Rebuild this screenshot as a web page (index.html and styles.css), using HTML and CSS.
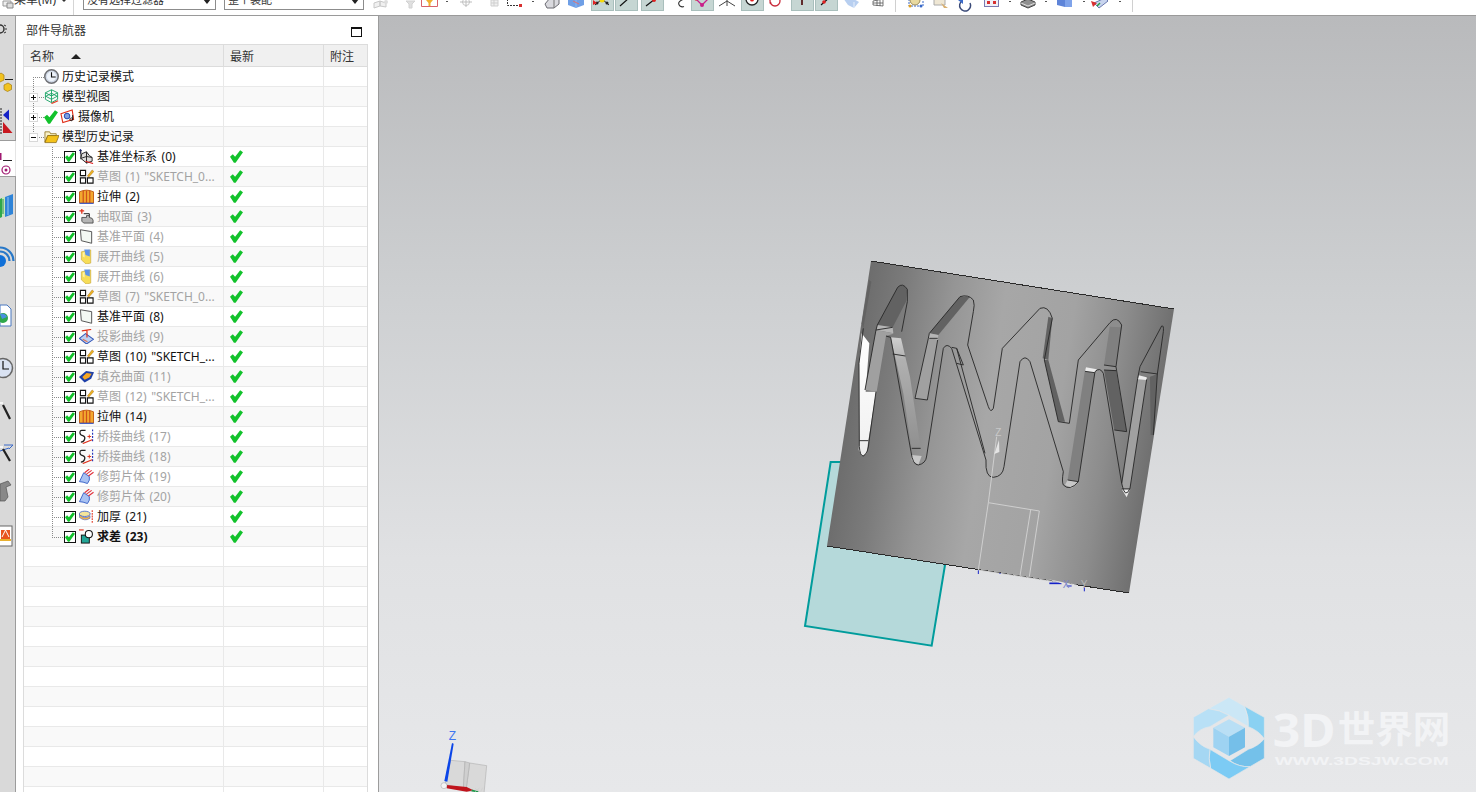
FILE: index.html
```html
<!DOCTYPE html>
<html lang="zh">
<head>
<meta charset="utf-8">
<title>部件导航器</title>
<link rel="stylesheet" href="styles.css">
</head>
<body>
<svg class="sprite" width="0" height="0" aria-hidden="true">
  <defs>
    <symbol id="i-check" viewBox="0 0 12 12"><path d="M0 6.200 L2.600 4 L4.700 6.200 L9.400 0.300 L12 2 L5.200 11.800 L3.600 11.800Z" fill="#12c22c"/></symbol>
    <symbol id="i-clock" viewBox="0 0 16 16"><circle cx="8" cy="8" r="7.200" fill="#cfd8e6" stroke="#6f7074" stroke-width="1.600"/><circle cx="8" cy="8" r="5" fill="#eef3fa"/><path d="M8 3.500V8.500H12.500" fill="none" stroke="#111" stroke-width="1.200"/></symbol>
    <symbol id="i-view" viewBox="0 0 16 16"><path d="M8 .8L14.500 4V11L8 14.500L1.500 11V4Z M1.500 4L8 7.500L14.500 4 M8 1V14.500 M1.500 8L8 4.500L14.500 8 M1.500 7.500L8 11L14.500 7.500" fill="none" stroke="#1fa56a" stroke-width="1"/><path d="M8 15.500L15 12.500" stroke="#e63a22" stroke-width="1.300"/></symbol>
    <symbol id="i-cam" viewBox="0 0 16 16"><path d="M1 5L13 1L14.500 11L3 14.500Z" fill="#fff" stroke="#e0301a" stroke-width="1.200"/><circle cx="7.500" cy="7.500" r="3" fill="#7f9fdf" stroke="#1c3fb0"/><path d="M12 9.500a1.500 1.500 0 1 0 .1 0M13.500 6.500V12" fill="none" stroke="#111"/></symbol>
    <symbol id="i-folder" viewBox="0 0 16 16"><path d="M1 3H6L7 5H13V7H4L1 14Z" fill="#f7f0c8" stroke="#8a6a10" stroke-width=".8"/><path d="M4 7H16L13 14.500H1Z" fill="#f4c21a" stroke="#8a6a10" stroke-width=".8"/></symbol>
    <symbol id="i-csys" viewBox="0 0 16 16"><path d="M1.500 0V5M0 1.500H3" stroke="#1a2a9a" stroke-width="1"/><path d="M2 1V11" stroke="#222" fill="none"/><path d="M3 5L8 3L11 7L14 9V13L8 15L2 10Z" fill="#ddd" stroke="#222" stroke-width="1"/><path d="M2 10L8 8L14 9M8 3V15" fill="none" stroke="#222"/><path d="M7 13L15 15.500" stroke="#d22" stroke-width="1.200"/></symbol>
    <symbol id="i-sketch" viewBox="0 0 16 16"><path d="M1.500 1.500H7V7H1.500ZM1.500 9.500H7V15H1.500ZM9 9.500H15V15H9Z" fill="#fff" stroke="#111" stroke-width="1.200"/><path d="M9 7.500L14 1L15.800 2.600L10.500 8.500Z" fill="#eeb520" stroke="#a06010" stroke-width=".5"/></symbol>
    <symbol id="i-extrude" viewBox="0 0 16 16"><path d="M.5 3Q8 -.5 15.500 3V15H.5Z" fill="#f2a92f" stroke="#c05a10"/><path d="M4.500 2V15M8 1.500V15M11.500 2V15" stroke="#d0501a" stroke-width="1.300"/><path d="M.5 15.300H15.500" stroke="#3858c8" stroke-width="1.200"/></symbol>
    <symbol id="i-extract" viewBox="0 0 16 16"><path d="M3 0V5M.5 2H5.500" stroke="#e0301a" stroke-width="1.400"/><path d="M5 5H11V9" stroke="#111" fill="none"/><path d="M3 9H8V7H11V9L14 10L15 12V15H5L3 13Z" fill="#b5b5b5" stroke="#444" stroke-width=".9"/></symbol>
    <symbol id="i-plane" viewBox="0 0 16 16"><path d="M1.500 .8L13.500 2.800V15.200L2.500 12.500Z" fill="#f3f8f3" stroke="#4e4e4e" stroke-width="1"/></symbol>
    <symbol id="i-unfold" viewBox="0 0 16 16"><path d="M2.500 3L12.500 1V15L7.500 16L2.500 11.500Z" fill="#f6dd58" stroke="#c9a93a" stroke-width=".7"/><path d="M5.500 .5H11.500V8L7 6.500Z" fill="#5f93e6"/><path d="M4 4L6 3V9L4 8Z" fill="#fff3a8"/></symbol>
    <symbol id="i-proj" viewBox="0 0 16 16"><path d="M.5 10L7 5L15.500 11L8 16Z" fill="#bcd0f2" stroke="#3658b8" stroke-width="1.100"/><path d="M3 2L13 .5M8.500 1.500V9" stroke="#e0301a" stroke-width="1.300"/><path d="M4 11L9 13.500" stroke="#e07050" stroke-width="1.200"/></symbol>
    <symbol id="i-fill" viewBox="0 0 16 16"><path d="M0 8.500L7.500 2L16 3.500L13 10.500L6 14.500Z" fill="#1d3fa8"/><path d="M3.500 8.500L8 4.200L13.500 5L11 9L6 11.500Z" fill="#f5a623"/></symbol>
    <symbol id="i-bridge" viewBox="0 0 16 16"><path d="M7 1.500H3Q1 1.500 1 4T4 7Q7 8 6 11T2 14" fill="none" stroke="#222" stroke-width="1.300"/><path d="M9 8H13M11 6V10" stroke="#e0301a"/><path d="M14.500 .5V13" stroke="#2233bb" stroke-width="1.200" stroke-dasharray="2 1.500"/><path d="M4 15.500L14 11.500" stroke="#e0301a" stroke-width="1.300"/></symbol>
    <symbol id="i-trim" viewBox="0 0 16 16"><path d="M.5 13.500L5 4L11 8Q12 12 9 15.500Q4 13.500 .5 13.500Z" fill="#a9c2f2" stroke="#3a62c8"/><path d="M6 4L11 0M8 5.500L13.500 1.500M10 7.500L15.500 3.500" stroke="#e0303a" stroke-width="1.200"/></symbol>
    <symbol id="i-thick" viewBox="0 0 17 16"><ellipse cx="6.500" cy="5" rx="6.200" ry="3" fill="#f5e59a" stroke="#4a6ac8"/><path d="M.5 6Q6.500 12 12.500 7V10Q6.500 14 .5 9Z" fill="#f3b24a" stroke="#4a6ac8" stroke-width=".7"/><path d="M15 1V15" stroke="#e0301a" stroke-width="1.200" stroke-dasharray="2 1"/></symbol>
    <symbol id="i-sub" viewBox="0 0 16 16"><path d="M0 1H5" stroke="#e0301a" stroke-width="1.200"/><rect x="2.500" y="6.500" width="8.500" height="8.500" fill="#22a596" stroke="#111"/><circle cx="10.500" cy="5.500" r="3.800" fill="#fff" stroke="#111" stroke-width="1.100"/></symbol>
  </defs>
</svg>

<header class="toolbar">
  <svg class="menu-icon" width="12" height="15" viewBox="0 0 12 15"><path d="M1 1H9V6H1Z" fill="#eee" stroke="#999"/><path d="M5 3H11V8H5Z" fill="#ddd" stroke="#888"/></svg>
  <span class="menu">菜单(M)</span>
  <span class="menu-caret"></span>
  <span class="sep-line"></span>
  <div class="select select-a"><span>没有选择过滤器</span><i class="caret"></i></div>
  <div class="select select-b"><span>整个装配</span><i class="caret"></i></div>

  <div class="tools">
    <svg width="32" height="15" viewBox="0 0 32 15"><path d="M1 3L7 1V6L1 8Z M7 1L13 3V7L7 6Z" fill="#f0f0f0" stroke="#c8c8c8"/><circle cx="13" cy="2" r="2" fill="#ddd"/></svg>
    <svg width="16" height="15" viewBox="0 0 16 15"><path d="M1 1H10L7 4V8H4V4Z" fill="#e0e0e0" stroke="#d2d2d2"/></svg>
    <svg width="25" height="15" viewBox="0 0 25 15"><path d="M.5 -2V6.500H16.500V-2" fill="#fff" stroke="#d9636a"/><path d="M5 0H12L9.500 3V6H7.500V3Z" fill="#f0b030"/></svg>
    <svg width="14" height="15" viewBox="0 0 14 15"><rect y="1" width="2" height="1" fill="#555"/></svg>
    <svg width="30" height="15" viewBox="0 0 30 15"><circle cx="6" cy="2" r="3.500" fill="none" stroke="#c6c6c6"/><path d="M6 -2V7M0 2H12" stroke="#bdbdbd"/></svg>
    <svg width="17" height="15" viewBox="0 0 17 15"><path d="M1 0H8V6H1ZM4 0V6M1 3H8" fill="#f0f0f0" stroke="#cfcfcf"/></svg>
    <svg width="25" height="15" viewBox="0 0 25 15"><path d="M.5 -1V5.500H13" fill="none" stroke="#333" stroke-dasharray="2 1"/><rect x="12" y="4" width="3" height="3" fill="#d83030"/></svg>
    <svg width="12" height="15" viewBox="0 0 12 15"><rect y="1" width="2" height="1" fill="#555"/></svg>
    <svg width="24" height="15" viewBox="0 0 24 15"><path d="M1 4L6 -2H15V4L10 8H3Z" fill="#d9d9de" stroke="#6a6a72"/><path d="M10 0V8" stroke="#777"/></svg>
    <svg width="23" height="15" viewBox="0 0 23 15"><path d="M0 -2H16V5L8 8L0 5Z" fill="#6f9fe6"/><path d="M8 0V8" stroke="#8fb8ee"/><path d="M5 1L11 4" stroke="#e07070"/></svg>
    <span class="sel g1"><svg width="21" height="14" viewBox="0 0 21 14"><path d="M3 9L10 3L17 9" fill="none" stroke="#222"/><circle cx="10" cy="4" r="2.500" fill="#f5d90a"/><circle cx="5" cy="7" r="1.500" fill="#222"/><circle cx="15" cy="7" r="1.500" fill="#222"/><path d="M1 4V9L5 7Z" fill="#e02020"/></svg></span>
    <span class="sel g3"><svg width="21" height="14" viewBox="0 0 21 14"><path d="M4 10L13 2" stroke="#111" stroke-width="1.200"/></svg></span>
    <span class="sel"><svg width="21" height="14" viewBox="0 0 21 14"><path d="M4 10L13 3" stroke="#111" stroke-width="1.200"/><circle cx="12" cy="4" r="2" fill="#e02020"/></svg></span>
    <svg width="27" height="15" viewBox="0 0 27 15"><path d="M20 -1Q12 2 16 6Q18 7.500 20 6.500" fill="none" stroke="#333" stroke-width="1.100"/></svg>
    <span class="sel"><svg width="21" height="14" viewBox="0 0 21 14"><path d="M3 2L10 9L17 2" fill="none" stroke="#c8208a" stroke-width="1.300"/><circle cx="10" cy="9" r="2" fill="#c8208a"/><circle cx="4" cy="3" r="1.500" fill="#e02020"/></svg></span>
    <svg width="27" height="15" viewBox="0 0 27 15"><path d="M13 -1V6M13 1L5 6M13 1L21 6" fill="none" stroke="#444"/></svg>
    <span class="sel"><svg width="21" height="14" viewBox="0 0 21 14"><circle cx="10" cy="3" r="6" fill="#fff" stroke="#222" stroke-width="1.300"/><circle cx="10" cy="3.500" r="2" fill="#e02020"/></svg></span>
    <svg width="27" height="15" viewBox="0 0 27 15"><circle cx="11" cy="1" r="5" fill="none" stroke="#c82a3a" stroke-width="1.300"/><circle cx="6.500" cy="3" r="1" fill="#c82a3a"/></svg>
    <span class="sel g1"><svg width="21" height="14" viewBox="0 0 21 14"><path d="M10 -1V9M3 3H17" stroke="#e01010" stroke-width="1.300"/><path d="M10 2V9" stroke="#111" stroke-width="1.200"/></svg></span>
    <span class="sel"><svg width="21" height="14" viewBox="0 0 21 14"><path d="M5 9L14 1" stroke="#111" stroke-width="1.200"/><circle cx="8" cy="6" r="1.800" fill="#e02020"/></svg></span>
    <svg width="34" height="15" viewBox="0 0 34 15"><path d="M5 -2H14L21 2L16 8L10 5Z" fill="#b8cff0"/><path d="M16 2V8" stroke="#e8f0fc"/></svg>
    <svg width="23" height="15" viewBox="0 0 23 15"><path d="M1 1L11 -1V6L1 5ZM1 3H11M5 0V6M8 0V6" fill="#fff" stroke="#555" stroke-width=".8"/></svg>
    <svg width="13" height="15" viewBox="0 0 13 15"><rect width="1" height="15" y="-3" fill="#d0d0d0"/></svg>
    <svg width="25" height="15" viewBox="0 0 25 15"><path d="M1 -1V6H15V-1" fill="none" stroke="#3868c8" stroke-dasharray="2 1"/><circle cx="7" cy="0" r="5" fill="#e8d9a0" stroke="#9a8a5a"/><circle cx="2" cy="6" r="1.500" fill="#e0a020"/><circle cx="13" cy="6" r="1.500" fill="#3868c8"/></svg>
    <svg width="24" height="15" viewBox="0 0 24 15"><path d="M1 -1H12V5H1Z" fill="#efe7d4" stroke="#aaa"/><path d="M8 3L15 8L11 8Z" fill="#d9b070"/></svg>
    <svg width="27" height="15" viewBox="0 0 27 15"><path d="M5 1A5.500 5.500 0 1 0 13 3" fill="none" stroke="#3a4a78" stroke-width="1.500"/><path d="M1 0L6 -1V4Z" fill="#3a6ac8"/></svg>
    <svg width="25" height="15" viewBox="0 0 25 15"><rect x=".5" y="-4" width="14" height="10.500" fill="#f0f0f8" stroke="#7a7ab0"/><rect x="3" y="1" width="3" height="3" fill="#d83030"/><rect x="9" y="1" width="3" height="3" fill="#d83030"/></svg>
    <svg width="11" height="15" viewBox="0 0 11 15"><rect y="1" width="2" height="1" fill="#555"/></svg>
    <svg width="25" height="15" viewBox="0 0 25 15"><path d="M1 2L8 -1L15 2V5L8 8L1 5Z" fill="#8f8f8f" stroke="#444"/><path d="M1 3L8 6L15 3" fill="none" stroke="#ddd"/></svg>
    <svg width="12" height="15" viewBox="0 0 12 15"><rect y="1" width="2" height="1" fill="#555"/></svg>
    <svg width="26" height="15" viewBox="0 0 26 15"><path d="M0 -2H15V5L8 7L0 5Z" fill="#5e84d8"/><path d="M8 0V7H15V0Z" fill="#7fa3ea"/></svg>
    <svg width="8" height="15" viewBox="0 0 8 15"><rect y="1" width="2" height="1" fill="#555"/></svg>
    <svg width="28" height="15" viewBox="0 0 28 15"><path d="M3 3L14 -2L17 1L8 8Z" fill="#c8d4ee" stroke="#6a7ab0"/><path d="M0 1L6 3L2 7Z" fill="#d83030"/><path d="M6 6L9 3" stroke="#20a040" stroke-width="1.500"/></svg>
    <svg width="13" height="15" viewBox="0 0 13 15"><rect y="1" width="2" height="1" fill="#555"/></svg>
    <svg width="2" height="15" viewBox="0 0 2 15"><rect width="1" height="15" y="-3" fill="#d0d0d0"/></svg>
  </div>
</header>

<main class="workspace">
  <aside class="rail">
    <div class="rail-block rail-top">
      <svg width="15" height="124" viewBox="0 0 15 124"><circle cx="0" cy="13" r="4" fill="none" stroke="#333" stroke-width="1.500"/><path d="M4 9L6 10M5 13H7M4 17L6 16" stroke="#333"/><path d="M-3 60L1 57L4 59V64L0 66L-3 64Z" fill="#f2c31f" stroke="#a67c10" stroke-width=".7"/><path d="M5 63.500H13" stroke="#222"/><path d="M4 69L8 67L11.500 69V73.500L7.500 75.500L4 73.500Z" fill="#f2c31f" stroke="#a67c10" stroke-width=".7"/><path d="M1 92V118" stroke="#222" stroke-dasharray="2 1"/><path d="M3 99L9 93.500V104.500Z" fill="#1522c8"/><path d="M3 106V117H12.500Z" fill="#c81820"/></svg>
    </div>
    <div class="rail-gap">
      <svg width="15" height="36" viewBox="0 0 15 36"><rect y="12" width="1.500" height="7" fill="#a01870"/><path d="M3 19.500H12" stroke="#222"/><circle cx="6" cy="29" r="4" fill="none" stroke="#a01870" stroke-width="1.200"/><circle cx="6" cy="29" r="1.500" fill="#a01870"/></svg>
    </div>
    <div class="rail-block rail-bottom">
      <svg width="15" height="380" viewBox="0 0 15 380"><path d="M0 22L2 21V40L0 41Z" fill="#2fa84a"/><path d="M2 20L5 20V39L2 40Z" fill="#c9e6b8"/><path d="M5 20L13 17V37L5 40Z" fill="#2f84d8"/><path d="M3 22V37" stroke="#1f9a48"/><path d="M8 20V38" stroke="#8fc4f2"/><circle cx="0" cy="84" r="6" fill="#1070d8"/><path d="M0 74.500A9.500 9.500 0 0 1 9.500 84M0 70.500A13.500 13.500 0 0 1 13.500 84" fill="none" stroke="#2878c8" stroke-width="2.200"/><path d="M0 128H7L11 132V149H0Z" fill="#fff" stroke="#4a78c0"/><circle cx="3" cy="141" r="5" fill="#2fa84a"/><path d="M0 137A5 5 0 0 1 7 140L2 142Z" fill="#4a90e0"/><circle cx="3" cy="191" r="9.500" fill="#d9e2f2" stroke="#666" stroke-width="1.500"/><path d="M3 184V192H9" fill="none" stroke="#111" stroke-width="1.200"/><path d="M-1 221V231M-4 226H3" stroke="#fff" stroke-width="1.500"/><path d="M3 228L10 242" stroke="#222" stroke-width="2.200"/><path d="M-1 265V275M-4 270H3" stroke="#fff" stroke-width="1.500"/><path d="M4 268H13L9 272" fill="none" stroke="#3868c8"/><path d="M0 274L9 271" stroke="#3868c8"/><path d="M3 272L10 284" stroke="#222" stroke-width="2.200"/><path d="M0 307L8 304L11 308L6 310L8 320L5 324H0Z" fill="#888" stroke="#555" stroke-width=".7"/><rect x="-1" y="349" width="13" height="20" fill="#fff" stroke="#666"/><path d="M1 353H10V362H1Z" fill="#e8541e"/><path d="M5.500 353L2 360M5.500 353L9 360" stroke="#fff"/><path d="M0 363H11" stroke="#e8b030" stroke-width="2"/></svg>
    </div>
  </aside>

  <section class="panel">
    <div class="panel-title">
      <span>部件导航器</span>
      <i class="maximize"></i>
    </div>
    <div class="table">
      <div class="row head">
        <div class="cell name head-name"><span>名称</span><i class="sort"></i></div>
        <div class="cell latest"><span>最新</span></div>
        <div class="cell note"><span>附注</span></div>
      </div>
      <div class="row">
        <div class="cell name top"><span class="guide g-top first"></span><svg class="ico"><use href="#i-clock"/></svg><span class="label">历史记录模式</span></div><div class="cell latest"></div><div class="cell note"></div>
      </div>
      <div class="row">
        <div class="cell name top"><span class="guide g-top"><i class="exp plus"></i></span><svg class="ico"><use href="#i-view"/></svg><span class="label">模型视图</span></div><div class="cell latest"></div><div class="cell note"></div>
      </div>
      <div class="row">
        <div class="cell name top"><span class="guide g-top"><i class="exp plus"></i></span><svg class="chk-top"><use href="#i-check"/></svg><svg class="ico"><use href="#i-cam"/></svg><span class="label">摄像机</span></div><div class="cell latest"></div><div class="cell note"></div>
      </div>
      <div class="row">
        <div class="cell name top"><span class="guide g-top last"><i class="exp minus"></i></span><svg class="ico"><use href="#i-folder"/></svg><span class="label">模型历史记录</span></div><div class="cell latest"></div><div class="cell note"></div>
      </div>

      <div class="row"><div class="cell name child"><span class="guide g-child"></span><span class="box"><svg><use href="#i-check"/></svg></span><svg class="ico"><use href="#i-csys"/></svg><span class="label">基准坐标系 (0)</span></div><div class="cell latest"><svg class="ok"><use href="#i-check"/></svg></div><div class="cell note"></div></div>
      <div class="row off"><div class="cell name child"><span class="guide g-child"></span><span class="box"><svg><use href="#i-check"/></svg></span><svg class="ico"><use href="#i-sketch"/></svg><span class="label">草图 (1) "SKETCH_0...</span></div><div class="cell latest"><svg class="ok"><use href="#i-check"/></svg></div><div class="cell note"></div></div>
      <div class="row"><div class="cell name child"><span class="guide g-child"></span><span class="box"><svg><use href="#i-check"/></svg></span><svg class="ico"><use href="#i-extrude"/></svg><span class="label">拉伸 (2)</span></div><div class="cell latest"><svg class="ok"><use href="#i-check"/></svg></div><div class="cell note"></div></div>
      <div class="row off"><div class="cell name child"><span class="guide g-child"></span><span class="box"><svg><use href="#i-check"/></svg></span><svg class="ico"><use href="#i-extract"/></svg><span class="label">抽取面 (3)</span></div><div class="cell latest"><svg class="ok"><use href="#i-check"/></svg></div><div class="cell note"></div></div>
      <div class="row off"><div class="cell name child"><span class="guide g-child"></span><span class="box"><svg><use href="#i-check"/></svg></span><svg class="ico"><use href="#i-plane"/></svg><span class="label">基准平面 (4)</span></div><div class="cell latest"><svg class="ok"><use href="#i-check"/></svg></div><div class="cell note"></div></div>
      <div class="row off"><div class="cell name child"><span class="guide g-child"></span><span class="box"><svg><use href="#i-check"/></svg></span><svg class="ico"><use href="#i-unfold"/></svg><span class="label">展开曲线 (5)</span></div><div class="cell latest"><svg class="ok"><use href="#i-check"/></svg></div><div class="cell note"></div></div>
      <div class="row off"><div class="cell name child"><span class="guide g-child"></span><span class="box"><svg><use href="#i-check"/></svg></span><svg class="ico"><use href="#i-unfold"/></svg><span class="label">展开曲线 (6)</span></div><div class="cell latest"><svg class="ok"><use href="#i-check"/></svg></div><div class="cell note"></div></div>
      <div class="row off"><div class="cell name child"><span class="guide g-child"></span><span class="box"><svg><use href="#i-check"/></svg></span><svg class="ico"><use href="#i-sketch"/></svg><span class="label">草图 (7) "SKETCH_0...</span></div><div class="cell latest"><svg class="ok"><use href="#i-check"/></svg></div><div class="cell note"></div></div>
      <div class="row"><div class="cell name child"><span class="guide g-child"></span><span class="box"><svg><use href="#i-check"/></svg></span><svg class="ico"><use href="#i-plane"/></svg><span class="label">基准平面 (8)</span></div><div class="cell latest"><svg class="ok"><use href="#i-check"/></svg></div><div class="cell note"></div></div>
      <div class="row off"><div class="cell name child"><span class="guide g-child"></span><span class="box"><svg><use href="#i-check"/></svg></span><svg class="ico"><use href="#i-proj"/></svg><span class="label">投影曲线 (9)</span></div><div class="cell latest"><svg class="ok"><use href="#i-check"/></svg></div><div class="cell note"></div></div>
      <div class="row"><div class="cell name child"><span class="guide g-child"></span><span class="box"><svg><use href="#i-check"/></svg></span><svg class="ico"><use href="#i-sketch"/></svg><span class="label">草图 (10) "SKETCH_...</span></div><div class="cell latest"><svg class="ok"><use href="#i-check"/></svg></div><div class="cell note"></div></div>
      <div class="row off"><div class="cell name child"><span class="guide g-child"></span><span class="box"><svg><use href="#i-check"/></svg></span><svg class="ico"><use href="#i-fill"/></svg><span class="label">填充曲面 (11)</span></div><div class="cell latest"><svg class="ok"><use href="#i-check"/></svg></div><div class="cell note"></div></div>
      <div class="row off"><div class="cell name child"><span class="guide g-child"></span><span class="box"><svg><use href="#i-check"/></svg></span><svg class="ico"><use href="#i-sketch"/></svg><span class="label">草图 (12) "SKETCH_...</span></div><div class="cell latest"><svg class="ok"><use href="#i-check"/></svg></div><div class="cell note"></div></div>
      <div class="row"><div class="cell name child"><span class="guide g-child"></span><span class="box"><svg><use href="#i-check"/></svg></span><svg class="ico"><use href="#i-extrude"/></svg><span class="label">拉伸 (14)</span></div><div class="cell latest"><svg class="ok"><use href="#i-check"/></svg></div><div class="cell note"></div></div>
      <div class="row off"><div class="cell name child"><span class="guide g-child"></span><span class="box"><svg><use href="#i-check"/></svg></span><svg class="ico"><use href="#i-bridge"/></svg><span class="label">桥接曲线 (17)</span></div><div class="cell latest"><svg class="ok"><use href="#i-check"/></svg></div><div class="cell note"></div></div>
      <div class="row off"><div class="cell name child"><span class="guide g-child"></span><span class="box"><svg><use href="#i-check"/></svg></span><svg class="ico"><use href="#i-bridge"/></svg><span class="label">桥接曲线 (18)</span></div><div class="cell latest"><svg class="ok"><use href="#i-check"/></svg></div><div class="cell note"></div></div>
      <div class="row off"><div class="cell name child"><span class="guide g-child"></span><span class="box"><svg><use href="#i-check"/></svg></span><svg class="ico"><use href="#i-trim"/></svg><span class="label">修剪片体 (19)</span></div><div class="cell latest"><svg class="ok"><use href="#i-check"/></svg></div><div class="cell note"></div></div>
      <div class="row off"><div class="cell name child"><span class="guide g-child"></span><span class="box"><svg><use href="#i-check"/></svg></span><svg class="ico"><use href="#i-trim"/></svg><span class="label">修剪片体 (20)</span></div><div class="cell latest"><svg class="ok"><use href="#i-check"/></svg></div><div class="cell note"></div></div>
      <div class="row"><div class="cell name child"><span class="guide g-child"></span><span class="box"><svg><use href="#i-check"/></svg></span><svg class="ico"><use href="#i-thick"/></svg><span class="label">加厚 (21)</span></div><div class="cell latest"><svg class="ok"><use href="#i-check"/></svg></div><div class="cell note"></div></div>
      <div class="row strong"><div class="cell name child"><span class="guide g-child end"></span><span class="box"><svg><use href="#i-check"/></svg></span><svg class="ico"><use href="#i-sub"/></svg><span class="label">求差 (23)</span></div><div class="cell latest"><svg class="ok"><use href="#i-check"/></svg></div><div class="cell note"></div></div>

      <div class="row"><div class="cell name"></div><div class="cell latest"></div><div class="cell note"></div></div>
      <div class="row"><div class="cell name"></div><div class="cell latest"></div><div class="cell note"></div></div>
      <div class="row"><div class="cell name"></div><div class="cell latest"></div><div class="cell note"></div></div>
      <div class="row"><div class="cell name"></div><div class="cell latest"></div><div class="cell note"></div></div>
      <div class="row"><div class="cell name"></div><div class="cell latest"></div><div class="cell note"></div></div>
      <div class="row"><div class="cell name"></div><div class="cell latest"></div><div class="cell note"></div></div>
      <div class="row"><div class="cell name"></div><div class="cell latest"></div><div class="cell note"></div></div>
      <div class="row"><div class="cell name"></div><div class="cell latest"></div><div class="cell note"></div></div>
      <div class="row"><div class="cell name"></div><div class="cell latest"></div><div class="cell note"></div></div>
      <div class="row"><div class="cell name"></div><div class="cell latest"></div><div class="cell note"></div></div>
      <div class="row"><div class="cell name"></div><div class="cell latest"></div><div class="cell note"></div></div>
      <div class="row"><div class="cell name"></div><div class="cell latest"></div><div class="cell note"></div></div>
      <div class="row"><div class="cell name"></div><div class="cell latest"></div><div class="cell note"></div></div>
    </div>
  </section>

  <section class="viewport">
    <svg class="scene" width="1097" height="776" viewBox="379 16 1097 776">
      <defs>
        <linearGradient id="body" gradientUnits="userSpaceOnUse" x1="871" y1="261" x2="1174" y2="309">
          <stop offset="0" stop-color="#6d6d6d"/><stop offset=".12" stop-color="#7b7b7b"/><stop offset=".28" stop-color="#959595"/><stop offset=".45" stop-color="#a7a7a7"/><stop offset=".68" stop-color="#a3a3a3"/><stop offset=".85" stop-color="#8c8c8c"/><stop offset="1" stop-color="#707070"/>
        </linearGradient>
        <linearGradient id="white" x1="0" y1="0" x2="0" y2="1"><stop offset="0" stop-color="#fff"/><stop offset="1" stop-color="#f2f2f2"/></linearGradient>
        <linearGradient id="strip" x1="0" y1="0" x2="0" y2="1"><stop offset="0" stop-color="#d0d0d0"/><stop offset=".2" stop-color="#b0b0b0"/><stop offset="1" stop-color="#909090"/></linearGradient>
      </defs>

      <!-- datum plane behind the part -->
      <g transform="translate(800 450) scale(.33333)">
        <path class="plane" d="M92 36L15 528L395 587L435 345L130 36Z"/>
      </g>

      <!-- part -->
      <path d="M871 261L1174 309L1129 593L827 546Z" fill="url(#body)"/>
      <path class="edge" d="M871 261L1174 309"/>
      <path class="edge" d="M827 546L1129 593"/>

      <g transform="translate(800 250) scale(.33333)">
        <!-- white gap -->
        <path d="M185 250L177 340L178 572H205L228 425H197L208 280Z" fill="url(#white)"/>
        <!-- walls -->
        <path class="wall dark" d="M207 90L214 95L190 235L185 220Z"/>
        <path class="wall dark" d="M232 225L293 112Q308 98 322 118L318 155L278 232Z"/>
        <path class="wall band" d="M232 225L278 232L280 250L228 240Z"/>
        <path class="wall mid" d="M228 240L195 420L230 425L258 258L278 252L280 250Z"/>
        <path class="wall" d="M272 262L303 265L330 380L362 595L335 595L310 430Z" fill="url(#strip)"/>
        <path class="wall dark" d="M388 250L480 140L510 140L415 255Z"/>
        <path class="wall band" d="M388 250L415 255L413 270L385 265Z"/>
        <path class="wall mid" d="M385 265L413 270L382 450L345 445Z"/>
        <path class="wall dark" d="M733 330L745 330L795 515L775 515Z"/>
        <path class="wall dark" d="M745 200L757 205L745 330L728 325Z"/>
        <path class="wall grey" d="M855 360L885 365L835 695L803 690Z"/>
        <path class="wall dark" d="M912 360L948 360L980 545L943 540Z"/>
        <path class="wall grey" d="M930 225L965 230L948 350L912 345Z"/>
        <path class="wall darkcap" d="M930 210Q945 200 965 215V232L930 230Z"/>
        <path class="wall mid" d="M1013 385L1040 388L990 715H965Z"/>
        <path class="wall dark" d="M1050 378L1072 372L1060 555L1052 555Z"/>
        <path class="wall grey" d="M1022 365L1072 372L1050 380L1020 375Z"/>
        <path class="wall lightcap" d="M1016 376L1040 382V390L1014 388Z"/>
        <path class="wall lightcap" d="M858 352L890 358L884 368L855 364Z"/>
        <path class="wall lightcap" d="M178 572H205L200 610L186 618L176 600Z"/>
        <path class="wall lightcap" d="M965 717L990 717L980 742Z"/>
        <path class="wall capsoft" d="M335 615L365 618L355 645L335 630Z"/>
        <path class="wall capsoft" d="M803 690L835 695L815 715L795 705Z"/>

        <!-- outline -->
        <path class="line" d="M190 235L177 340L178 590Q180 618 190 618Q205 610 207 575L228 425"/>
        <path class="line" d="M195 420L228 240L232 225L293 112Q308 96 322 118L322 155L305 245"/>
        <path class="line" d="M258 258L272 262L333 605Q338 645 355 645Q378 640 380 618L430 295Q440 278 455 295L558 630Q555 682 580 682Q608 680 612 650L660 335Q675 312 690 335L790 665Q785 695 790 705Q810 725 835 695L885 365Q900 350 910 370L965 700Q975 750 990 715L1040 388"/>
        <path class="line" d="M345 445L385 265L388 250L480 140Q505 132 520 150Q525 165 520 185L503 285L565 470Q572 490 580 475L607 295L720 175Q745 165 757 205L733 330L775 515L808 520L835 330L930 218Q950 195 965 225L948 350L980 545"/>
        <path class="line" d="M1020 350L1085 228Q1092 225 1090 245L1072 372L1060 555"/>
        <path class="line" d="M1020 350L1013 385L965 700"/>
        <path class="line" d="M228 240L278 232M335 595H362M178 572H205M388 265H413M382 450L413 270M345 445L382 450M855 364L884 368M912 345L948 350M912 360L948 362M943 540L980 545M1022 365L1072 372M803 690L835 695M965 717L990 717M278 312L316 318M470 340L490 345M455 292L470 295L555 610M470 295L490 345"/>
      </g>

      <!-- wireframe datum / sketch lines over the part -->
      <g transform="translate(800 450) scale(.33333)">
        <path class="wire" d="M590 -40L565 158L535 360M565 158L718 183L688 380M692 180L660 378M535 360L830 405"/>
        <path d="M535 361V372M600 372V369" stroke="#1522c8" stroke-width="3" fill="none"/>
        <path d="M748 400H785" stroke="#1522c8" stroke-width="5"/>
        <path d="M800 408H815M853 410V424" stroke="#1522c8" stroke-width="3"/>
        <path d="M745 388L775 394L830 405L790 402Z" fill="#e4e4e4"/>
        <text class="axis ax-x" x="788" y="414">X</text>
        <text class="axis ax-y" x="842" y="415">Y</text>
      </g>
      <g transform="translate(800 250) scale(.33333)">
        <text class="axis ax-z" x="586" y="558">Z</text>
        <path d="M597 570L583 612L598 606Z" fill="#e4e4e4"/>
      </g>

      <!-- orientation triad -->
      <g transform="translate(430 725) scale(.33333)">
        <path class="cube" d="M62 106L105 110L100 192L45 178Z"/>
        <path class="cube" d="M119 114L170 122L162 205L108 196Z"/>
        <path d="M105 110L119 114L108 196L100 192Z" fill="#cfcfcf" stroke="#b0b0b0" stroke-width="2"/>
        <path d="M66 54L71 56L52 170L43 168Z" fill="#0b45e8"/>
        <text class="triad-z" x="56" y="46">Z</text>
        <path d="M50 180L110 186L130 196L110 200L50 190Z" fill="#c0141c"/>
        <path d="M125 196L145 201" stroke="#1f9a4a" stroke-width="5"/>
        <path d="M135 190L148 200M148 190L135 200M158 188L152 200" stroke="#cfcfcf" stroke-width="2" fill="none"/>
        <circle cx="42" cy="182" r="9" fill="#f4f4f4" stroke="#777"/>
      </g>

      <!-- watermark -->
      <g transform="translate(1180 690) scale(.33333)">
        <g class="blades">
          <path fill="#cbe7f6" d="M85 56L147 22L194 49Q208 82 205 110L147 76Q120 60 85 56Z"/>
          <path fill="#8ad1f2" d="M194 49L253 82V146Q236 122 205 110Q208 82 194 49Z"/>
          <path fill="#74c1ea" d="M253 146V205L210 230Q178 232 150 212L205 178Q236 168 253 146Z"/>
          <path fill="#7ccbf4" d="M210 230L147 267L92 235Q84 205 90 178L147 212Q178 232 210 230Z"/>
          <path fill="#a5d7f3" d="M92 235L40 205V140Q60 168 90 178Q84 205 92 235Z"/>
          <path fill="#b8e0f6" d="M40 140V82L85 56Q120 60 147 76L90 110Q58 115 40 140Z"/>
        </g>
        <path fill="#b9dff5" d="M147 88L195 113L147 140L100 113Z"/>
        <path fill="#9ed3f2" d="M100 113L147 140V198L100 172Z"/>
        <path fill="#75bfe9" d="M195 113L147 140V198L195 172Z"/>
        <text class="wm-3d" x="278" y="170" textLength="188" lengthAdjust="spacingAndGlyphs">3D</text>
        <text class="wm-cn" x="473" y="160" textLength="338" lengthAdjust="spacingAndGlyphs">世界网</text>
        <text class="wm-url" x="284" y="224" textLength="522" lengthAdjust="spacingAndGlyphs">WWW.3DSJW.COM</text>
      </g>
    </svg>
  </section>
</main>
</body>
</html>
```
FILE: styles.css
```css
* { box-sizing: border-box; }
html, body { margin: 0; padding: 0; height: 100%; }
body {
  width: 1476px;
  height: 792px;
  overflow: hidden;
  display: flex;
  flex-direction: column;
  background: #fff;
  font-family: "Noto Sans", "Noto Sans CJK SC", sans-serif;
  font-size: 12px;
  color: #222;
}
.sprite { position: absolute; }

/* toolbar: only the lower edge of it is on screen */
.toolbar {
  flex: none;
  height: 16px;
  display: flex;
  align-items: flex-end;
  overflow: hidden;
  background: #fff;
  border-bottom: 1px solid #9a9a9a;
  font-size: 11px;
  line-height: 14px;
  color: #333;
  white-space: nowrap;
}
.menu-icon { flex: none; margin-left: 2px; }
.menu { flex: none; width: 42px; margin-bottom: 8px; font-size: 12px; }
.menu-caret { flex: none; width: 0; height: 0; margin: 0 0 11px 6px; border: 2px solid transparent; border-top-color: #333; }
.sep-line { flex: none; width: 1px; height: 15px; margin-left: 7px; background: #d5d5d5; }
.select {
  flex: none;
  height: 22px;
  display: flex;
  align-items: center;
  justify-content: space-between;
  padding: 2px 4px 0 3px;
  margin-bottom: 5px;
  background: #fff;
  border: 1px solid #8c8c8c;
}
.select-a { width: 133px; margin-left: 9px; }
.select-b { width: 140px; margin-left: 8px; }
.caret { width: 0; height: 0; border: 4px solid transparent; border-top: 5px solid #222; border-bottom: 0; margin-top: 2px; }
.tools { flex: none; display: flex; align-items: flex-end; margin-left: 9px; height: 15px; }
.tools > svg { flex: none; display: block; }
.sel {
  flex: none;
  width: 23px;
  height: 16px;
  margin-bottom: 4px;
  display: flex;
  align-items: flex-end;
  background: #c6d6d3;
  border: 1px solid #a9bfbc;
}
.sel svg { display: block; }
.g1 { margin-right: 1px; }
.g3 { margin-right: 3px; }

/* layout */
.workspace { flex: 1; min-height: 0; display: flex; }

.rail { flex: none; width: 16px; display: flex; flex-direction: column; background: #fff; }
.rail svg { display: block; }
.rail-block { background: #d9d9d9; border-right: 1px solid #9c9c9c; overflow: hidden; }
.rail-top { height: 125px; border-bottom: 1px solid #9c9c9c; }
.rail-gap { height: 35px; border-right: 1px solid #e5e5e5; overflow: hidden; }
.rail-bottom { flex: 1; border-top: 1px solid #9c9c9c; }

.panel {
  flex: none;
  width: 363px;
  display: flex;
  flex-direction: column;
  overflow: hidden;
  background: #fff;
  border-right: 1px solid #9c9c9c;
}
.panel-title {
  flex: none;
  height: 28px;
  display: flex;
  align-items: center;
  justify-content: space-between;
  padding: 0 16px 0 10px;
  color: #333;
}
.maximize { width: 11px; height: 10px; border: 1px solid #111; border-top-width: 2px; margin-top: 3px; }

.table {
  flex: none;
  width: 345px;
  margin-left: 7px;
  background: #fff;
  border: 1px solid #dcdcdc;
  border-bottom: 0;
}
.row {
  display: grid;
  grid-template-columns: 200px 100px 43px;
  height: 20px;
  border-bottom: 1px solid #e9e9e9;
}
.row:nth-child(even) { background: #fff; }
.row:nth-child(odd) { background: #f9f9f9; }
.row.head { height: 22px; background: #f0f0f0; border-bottom: 1px solid #dcdcdc; color: #333; }
.cell {
  display: flex;
  align-items: center;
  height: 19px;
  min-width: 0;
  border-right: 1px solid #e9e9e9;
  white-space: nowrap;
}
.cell.note { border-right: 0; }
.head .cell { height: 21px; padding: 1px 0 0 6px; border-right-color: #dcdcdc; }
.sort { width: 0; height: 0; margin-left: 17px; border: 5px solid transparent; border-top: 0; border-bottom: 5px solid #222; }

.cell.top { padding-left: 9px; }
.cell.child { padding-left: 28px; }
.label { color: #111; padding-bottom: 1px; word-spacing: 1.500px; }
.off .label { color: #a3a3a3; }
.strong .label { font-weight: 700; color: #111; }

/* dotted tree connectors */
.guide {
  flex: none;
  position: relative;
  align-self: flex-start;
  height: 20px;
  background-repeat: no-repeat;
  background-image:
    repeating-linear-gradient(to bottom, #8a8a8a 0 1px, transparent 1px 2px),
    repeating-linear-gradient(to right, #8a8a8a 0 1px, transparent 1px 2px);
  background-size: 1px 100%, 100% 1px;
  background-position: left top, left 10px;
}
.g-top { width: 11px; }
.g-child { width: 12px; }
.g-top.first { background-size: 1px 50%, 100% 1px; background-position: left bottom, left 10px; }
.g-top.last { background-size: 1px 6px, 100% 1px; background-position: left top, left 10px; }
.g-child.end { background-size: 1px 11px, 100% 1px; background-position: left top, left 10px; }
.exp {
  position: absolute;
  left: -4px;
  top: 6px;
  width: 9px;
  height: 9px;
  background: #fff;
  border: 1px solid #d8d8d8;
}
.exp::before { content: ""; position: absolute; left: 1px; top: 3px; width: 5px; height: 1px; background: #111; }
.exp.plus::after { content: ""; position: absolute; left: 3px; top: 1px; width: 1px; height: 5px; background: #111; }

.ico { flex: none; width: 15px; height: 15px; margin-right: 3px; }
.box {
  flex: none;
  width: 12px;
  height: 12px;
  margin-right: 3px;
  background: #fff;
  border: 1px solid #111;
  display: flex;
}
.box svg { width: 10px; height: 10px; display: block; }
.chk-top { flex: none; width: 14px; height: 14px; margin-right: 2px; }
.ok { flex: none; width: 13px; height: 13px; margin-left: 6px; }

/* viewport */
.viewport {
  flex: 1;
  min-width: 0;
  overflow: hidden;
  background: linear-gradient(to bottom, #b9babc 0%, #cdcfd1 35%, #e0e1e3 70%, #e7e8ea 100%);
}
.scene { display: block; }
.plane { fill: #b5d9da; stroke: #009c9c; stroke-width: 6; }
.edge { stroke: #2a2a2a; stroke-width: 1; fill: none; shape-rendering: crispEdges; }
.line { stroke: #2a2a2a; stroke-width: 2.800; fill: none; }
.wall { stroke: none; }
.dark { fill: #626262; }
.band { fill: #b5b5b5; }
.mid { fill: #a0a0a0; }
.grey { fill: #808080; }
.darkcap { fill: #8d8d8d; }
.lightcap { fill: #ececec; }
.capsoft { fill: #c8c8c8; }
.wire { stroke: #cfcfcf; stroke-width: 3; fill: none; }
.axis { font-family: "Liberation Sans", sans-serif; font-size: 30px; }
.ax-x { fill: #7a86c8; }
.ax-y { fill: #b5b5b5; }
.ax-z { fill: #c9c9c9; }
.cube { fill: #d9d9d9; stroke: #b3b3b3; stroke-width: 2; }
.triad-z { font-family: "Liberation Sans", sans-serif; font-size: 36px; fill: #3f76f0; }
.blades path { stroke: #e6e7e9; stroke-width: 2; }
.wm-3d { font-family: "Noto Sans", sans-serif; font-weight: 700; font-size: 140px; fill: #f2f3f5; }
.wm-cn { font-family: "Noto Sans CJK SC", sans-serif; font-weight: 700; font-size: 112px; fill: #f2f3f5; }
.wm-url { font-family: "Liberation Sans", sans-serif; font-weight: 700; font-size: 34px; fill: #f2f3f5; }
```
